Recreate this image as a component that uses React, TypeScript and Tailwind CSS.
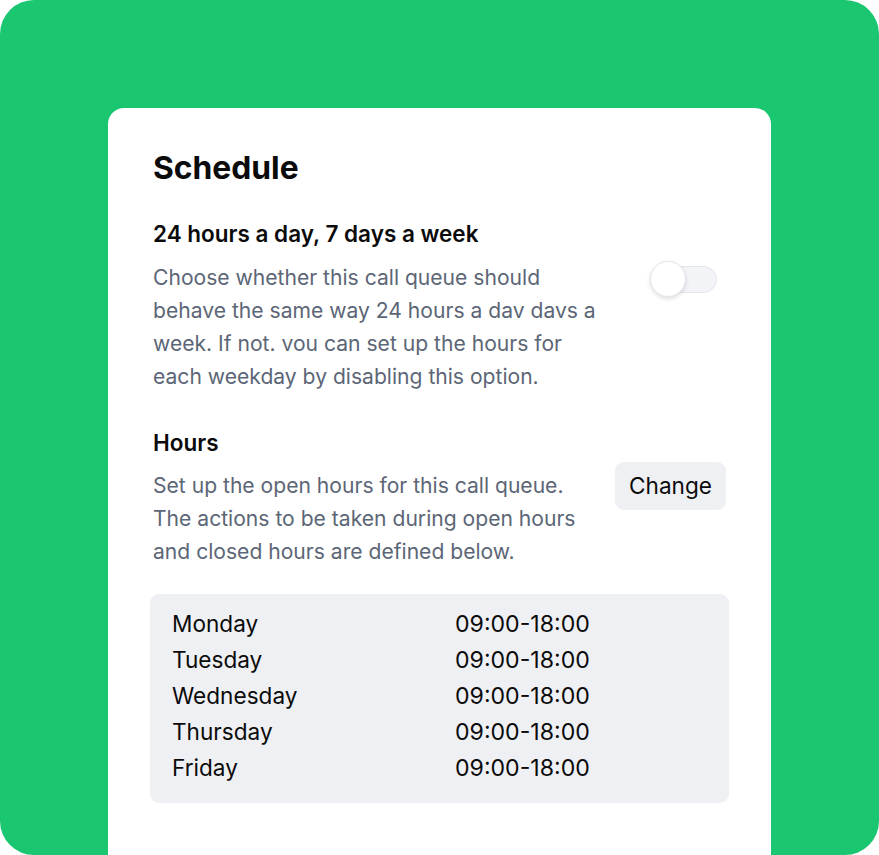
import React from "react";

const days = ["Monday", "Tuesday", "Wednesday", "Thursday", "Friday"];

export default function App() {
  return (
    <div
      className="w-[879px] h-[855px] bg-[#1bc671] rounded-[34px] overflow-hidden pt-[108px] px-[108px]"
      style={{ fontFamily: "Inter, 'Noto Sans', sans-serif" }}
    >
      <div className="bg-white rounded-t-[16px] h-[800px] pl-[45px] pr-[45px] pt-[42px]">
        <h1 className="text-[31.8px] leading-[36px] font-bold text-[#0b0b0c]">
          Schedule
        </h1>

        <h2 className="mt-[34px] text-[22.5px] leading-[28px] font-semibold text-[#0b0b0c]">
          24 hours a day, 7 days a week
        </h2>
        <div className="flex items-start">
          <p className="mt-[12.5px] w-[453px] text-[21.1px] leading-[33px] text-[#5c6676]">
            Choose whether this call queue should behave the same way 24 hours a dav davs a
            week. If not. vou can set up the hours for each weekday by disabling this option.
          </p>
          <div className="ml-auto mr-[9px] mt-[13px] relative w-[67px] h-[36px] flex items-center">
            <div className="absolute right-0 w-[65px] h-[27px] rounded-full bg-[#f3f4f7] border border-[#e3e5ea]" />
            <div className="absolute left-0 top-0 w-[36px] h-[36px] rounded-full bg-white border border-[#e3e5ea] shadow-[0_2px_4px_rgba(0,0,0,0.12)]" />
          </div>
        </div>

        <h2 className="mt-[36.5px] text-[22.5px] leading-[28px] font-semibold text-[#0b0b0c]">
          Hours
        </h2>
        <div className="flex items-start gap-[24px]">
          <p className="mt-[11.5px] flex-1 text-[21.1px] leading-[33px] text-[#5c6676]">
            Set up the open hours for this call queue. The actions to be taken during open
            hours and closed hours are defined below.
          </p>
          <button className="mt-[5px] h-[48px] px-[14px] rounded-[9px] bg-[#eff0f3] text-[22.6px] text-[#0b0b0c]">
            Change
          </button>
        </div>

        <div className="mt-[26.5px] -mx-[3px] rounded-[9px] bg-[#eff0f3] pl-[22px] pt-[12px] pb-[17px]">
          {days.map((d) => (
            <div key={d} className="grid grid-cols-[283px_1fr] text-[22.6px] leading-[36px] text-[#0b0b0c]">
              <span>{d}</span>
              <span className="text-[23.1px]">09:00-18:00</span>
            </div>
          ))}
        </div>
      </div>
    </div>
  );
}
